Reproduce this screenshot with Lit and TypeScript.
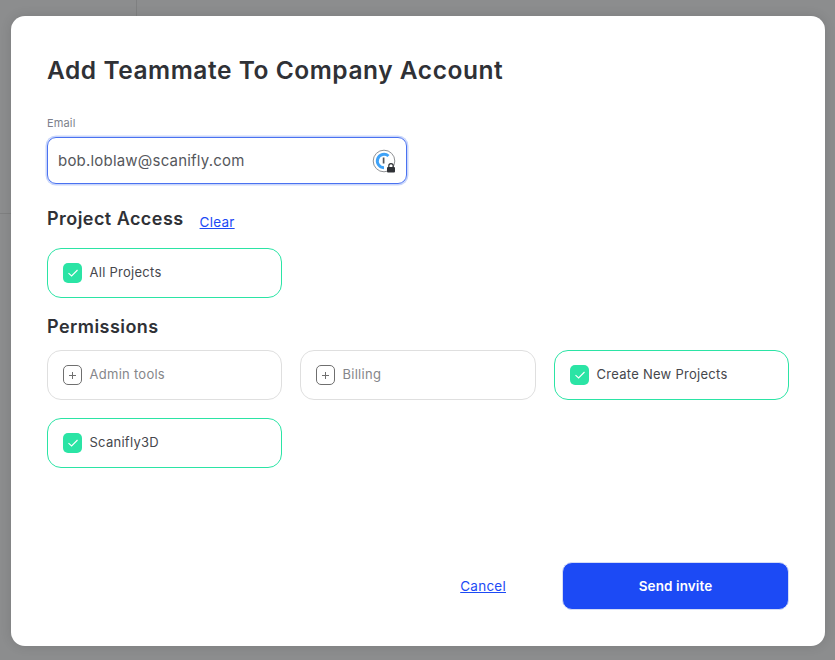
import { LitElement, html, css } from "lit";
import { customElement } from "lit/decorators.js";

const check = html`<span class="box on"><svg width="12" height="10" viewBox="0 0 12 10"><path d="M1.5 5.2 L4.6 8 L10.5 2" fill="none" stroke="#fff" stroke-width="1.1"/></svg></span>`;
const plus = html`<span class="box off"><svg width="9" height="9" viewBox="0 0 9 9"><path d="M4.5 1V8M1 4.5H8" fill="none" stroke="#6f6f6f" stroke-width="1"/></svg></span>`;

@customElement("app-root")
export class AppRoot extends LitElement {
  static styles = css`
    :host { display: block; position: relative; width: 835px; height: 660px; box-sizing: border-box; padding: 16px 10px 14px 11px; background: #8c8d8e; overflow: hidden; font-family: Inter, "Liberation Sans", sans-serif; color: #2f3136; }
    .vline { position: absolute; left: 136px; top: 0; width: 1px; height: 16px; background: #7f8081; }
    .hline { position: absolute; left: 0; top: 213px; width: 11px; height: 1px; background: #7f8081; }
    .card { position: relative; box-sizing: border-box; height: 630px; background: #fff; border-radius: 14px; padding: 38px 36px 36.5px; display: flex; flex-direction: column; box-shadow: 0 0 12px rgba(0,0,0,.12); }
    h1 { margin: 0; font-size: 24.5px; line-height: 32px; font-weight: 600; letter-spacing: .55px; }
    .label { margin-top: 30px; font-size: 11px; line-height: 14px; color: #7d7f8c; letter-spacing: .15px; }
    .input { margin-top: 7px; box-sizing: border-box; width: 360px; height: 47px; border: 1.5px solid #4a72f0; border-radius: 9px; box-shadow: 0 0 0 1.5px #c9d6fb; display: flex; align-items: center; justify-content: space-between; padding: 0 10px; font-size: 15px; color: #55575c; letter-spacing: .2px; }
    .onepass { display: block; }
    .head { display: flex; align-items: baseline; gap: 16px; margin-top: 23px; }
    h2 { margin: 0; font-size: 18px; line-height: 24px; font-weight: 600; letter-spacing: .45px; }
    a { color: #1c4af5; text-decoration: underline; font-size: 13.5px; letter-spacing: .25px; }
    .head a { position: relative; top: 2px; }
    .grid { display: grid; grid-template-columns: 235px 236px 235px; column-gap: 18px; row-gap: 18px; }
    .grid.access { margin-top: 17px; }
    .perm-head { margin-top: 17px; }
    .grid.perms { margin-top: 11px; }
    .opt { box-sizing: border-box; height: 50px; border: 1px solid #dfdfdf; border-radius: 14px; display: flex; align-items: center; gap: 7.5px; padding: 0 15px; font-size: 13px; letter-spacing: .27px; color: #85868a; }
    .opt span:last-child { margin-bottom: 2px; }
    .opt.sel { border-color: #2be4a5; color: #45474c; }
    .box { box-sizing: border-box; width: 19px; height: 20px; border-radius: 5px; display: flex; align-items: center; justify-content: center; flex: none; }
    .box.on { background: #2be4a5; }
    .box.off { border: 1px solid #6f6f6f; }
    .foot { margin-top: auto; display: flex; align-items: center; justify-content: flex-end; }
    .foot a { margin-right: 56px; }
    .send { box-sizing: border-box; width: 227px; height: 48px; border: 1px solid #d5dcf6; border-radius: 10px; background: #1c4af5; color: #fff; font: 600 13.5px Inter, "Liberation Sans", sans-serif; letter-spacing: .1px; }
  `;

  private opt(label: string, sel: boolean) {
    return html`<div class="opt ${sel ? "sel" : ""}">${sel ? check : plus}<span>${label}</span></div>`;
  }

  render() {
    return html`
      <div class="vline"></div><div class="hline"></div>
      <div class="card">
        <h1>Add Teammate To Company Account</h1>
        <div class="label">Email</div>
        <div class="input">
          <span>bob.loblaw@scanifly.com</span>
          <svg class="onepass" width="24" height="24" viewBox="0 0 24 24">
            <circle cx="12" cy="12" r="10.8" fill="#fff" stroke="#8f9194" stroke-width="1"/>
            <path d="M16.5 7 A6.7 6.7 0 1 0 12 18.7" fill="none" stroke="#3fa2f7" stroke-width="3"/>
            <path d="M11.6 8.5V14.5" stroke="#55575c" stroke-width="1.7"/>
            <rect x="15" y="18" width="8" height="5.5" rx="1" fill="#2f3136"/>
            <path d="M16.8 18.5V16.8a2.2 2.2 0 0 1 4.4 0v1.7" fill="none" stroke="#2f3136" stroke-width="1.2"/>
          </svg>
        </div>
        <div class="head"><h2>Project Access</h2><a href="#">Clear</a></div>
        <div class="grid access">${this.opt("All Projects", true)}</div>
        <h2 class="perm-head">Permissions</h2>
        <div class="grid perms">
          ${this.opt("Admin tools", false)}
          ${this.opt("Billing", false)}
          ${this.opt("Create New Projects", true)}
          ${this.opt("Scanifly3D", true)}
        </div>
        <div class="foot"><a href="#">Cancel</a><button class="send">Send invite</button></div>
      </div>`;
  }
}
